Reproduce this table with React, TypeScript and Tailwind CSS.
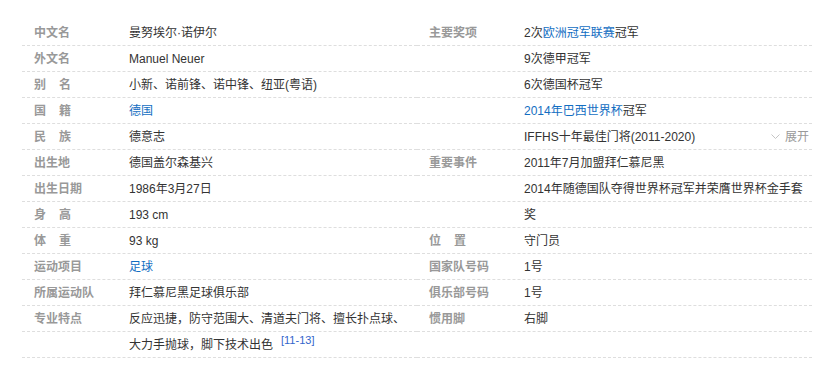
type Part = string | { link: string } | { sup: string };

type Row = {
  label?: string;
  spaced?: boolean;
  value: Part[];
  more?: boolean;
};

const leftRows: Row[] = [
  { label: '中文名', value: ['曼努埃尔·诺伊尔'] },
  { label: '外文名', value: ['Manuel Neuer'] },
  { label: '别名', spaced: true, value: ['小新、诺前锋、诺中锋、纽亚(粤语)'] },
  { label: '国籍', spaced: true, value: [{ link: '德国' }] },
  { label: '民族', spaced: true, value: ['德意志'] },
  { label: '出生地', value: ['德国盖尔森基兴'] },
  { label: '出生日期', value: ['1986年3月27日'] },
  { label: '身高', spaced: true, value: ['193 cm'] },
  { label: '体重', spaced: true, value: ['93 kg'] },
  { label: '运动项目', value: [{ link: '足球' }] },
  { label: '所属运动队', value: ['拜仁慕尼黑足球俱乐部'] },
  { label: '专业特点', value: ['反应迅捷，防守范围大、清道夫门将、擅长扑点球、'] },
  { value: ['大力手抛球，脚下技术出色', { sup: '[11-13]' }] },
];

const rightRows: Row[] = [
  { label: '主要奖项', value: ['2次', { link: '欧洲冠军联赛' }, '冠军'] },
  { value: ['9次德甲冠军'] },
  { value: ['6次德国杯冠军'] },
  { value: [{ link: '2014年巴西世界杯' }, '冠军'] },
  { value: ['IFFHS十年最佳门将(2011-2020)'], more: true },
  { label: '重要事件', value: ['2011年7月加盟拜仁慕尼黑'] },
  { value: ['2014年随德国队夺得世界杯冠军并荣膺世界杯金手套'] },
  { value: ['奖'] },
  { label: '位置', spaced: true, value: ['守门员'] },
  { label: '国家队号码', value: ['1号'] },
  { label: '俱乐部号码', value: ['1号'] },
  { label: '惯用脚', value: ['右脚'] },
  { value: [] },
];

function Label({ row }: { row: Row }) {
  if (!row.label) return null;
  if (row.spaced) {
    return (
      <>
        {row.label[0]}
        <span className="ml-[13px]">{row.label[1]}</span>
      </>
    );
  }
  return <>{row.label}</>;
}

function InfoRow({ row }: { row: Row }) {
  return (
    <div className="flex h-[26px] leading-[26px] border-b border-dashed border-[#dedede]">
      <div className="w-[107px] shrink-0 pl-[12px] font-bold text-[#999]">
        <Label row={row} />
      </div>
      <div className="flex flex-1 items-center whitespace-nowrap text-[#333]">
        {row.value.map((p, i) =>
          typeof p === 'string' ? (
            <span key={i}>{p}</span>
          ) : 'link' in p ? (
            <span key={i} className="text-[#136ec2]">
              {p.link}
            </span>
          ) : (
            <span key={i} className="relative top-[-5px] ml-[8px] text-[11px] text-[#3366cc]">
              {p.sup}
            </span>
          )
        )}
        {row.more && (
          <span className="ml-auto mr-[3px] flex items-center gap-[5px] text-[#999]">
            <svg width="9" height="6" viewBox="0 0 9 6" className="mt-[1px]">
              <polyline points="0.5,0.5 4.5,4.5 8.5,0.5" fill="none" stroke="#c4c4c4" strokeWidth="1" />
            </svg>
            展开
          </span>
        )}
      </div>
    </div>
  );
}

export default function App() {
  return (
    <div className="min-h-screen bg-white pt-[20px] pl-[22px] text-[12px] font-['Liberation_Sans','Noto_Sans_CJK_SC',sans-serif]">
      <div className="flex w-[790px]">
        <div className="w-[395px]">
          {leftRows.map((r, i) => (
            <InfoRow key={i} row={r} />
          ))}
        </div>
        <div className="w-[395px]">
          {rightRows.map((r, i) => (
            <InfoRow key={i} row={r} />
          ))}
        </div>
      </div>
    </div>
  );
}
